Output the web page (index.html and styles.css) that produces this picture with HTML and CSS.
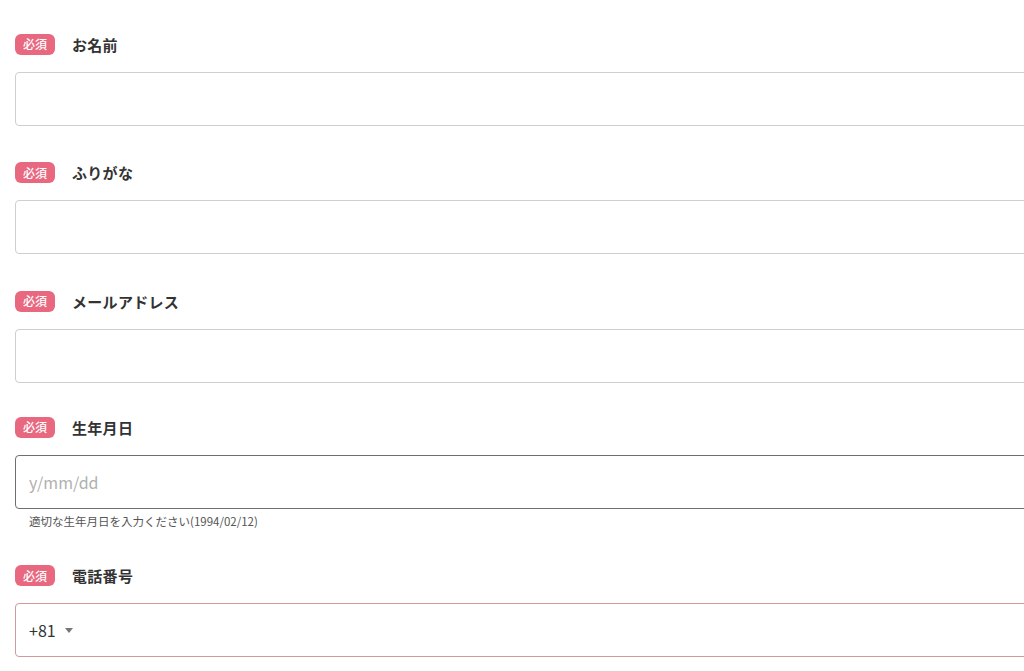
FILE: index.html
```html
<!DOCTYPE html>
<html lang="ja">
<head>
<meta charset="utf-8">
<link rel="stylesheet" href="styles.css">
</head>
<body>
<form class="form">
  <div class="field">
    <div class="field-head"><span class="badge">必須</span><span class="label">お名前</span></div>
    <div class="input"></div>
  </div>
  <div class="field">
    <div class="field-head"><span class="badge">必須</span><span class="label">ふりがな</span></div>
    <div class="input"></div>
  </div>
  <div class="field field-tight">
    <div class="field-head"><span class="badge">必須</span><span class="label">メールアドレス</span></div>
    <div class="input"></div>
  </div>
  <div class="field field-date">
    <div class="field-head"><span class="badge">必須</span><span class="label">生年月日</span></div>
    <div class="input input-dark"><span class="placeholder">y/mm/dd</span></div>
    <div class="help">適切な生年月日を入力ください(1994/02/12)</div>
  </div>
  <div class="field">
    <div class="field-head"><span class="badge">必須</span><span class="label">電話番号</span></div>
    <div class="input input-error"><span class="code">+81</span><span class="caret"></span></div>
  </div>
</form>
</body>
</html>
```
FILE: styles.css
```css
html, body {
  margin: 0;
  padding: 0;
  background: #fff;
  overflow: hidden;
}
body {
  font-family: "Noto Sans CJK JP", "Noto Sans", sans-serif;
  color: #333;
}
.form {
  display: flex;
  flex-direction: column;
  padding: 33px 0 0 15px;
  width: 1060px;
}
.field {
  display: flex;
  flex-direction: column;
  margin-bottom: 36px;
}
.field-tight {
  margin-bottom: 33.5px;
}
.field-date {
  margin-bottom: 0;
}
.field-head {
  display: flex;
  align-items: center;
  height: 22px;
  margin-bottom: 16.5px;
}
.badge {
  display: inline-flex;
  align-items: center;
  justify-content: center;
  width: 40px;
  height: 21px;
  border-radius: 6px;
  background: #e8687f;
  color: #fff;
  font-size: 12px;
  font-weight: 500;
  line-height: 1;
  margin-right: 17px;
}
.label {
  font-size: 15px;
  font-weight: 700;
  color: #333;
  letter-spacing: 0.3px;
}
.input {
  box-sizing: border-box;
  height: 54px;
  border: 1px solid #cfcfcf;
  border-radius: 4px;
  display: flex;
  align-items: center;
  padding-left: 13px;
}
.input-dark {
  border-color: #6e6e6e;
}
.input-error {
  border-color: #d29a9a;
}
.placeholder {
  font-size: 16px;
  color: #b0b0b0;
}
.help {
  font-size: 11.5px;
  color: #555;
  margin: 5px 0 36px 14px;
  line-height: 15px;
}
.code {
  font-size: 16px;
  color: #333;
}
.caret {
  width: 0;
  height: 0;
  border-left: 4.5px solid transparent;
  border-right: 4.5px solid transparent;
  border-top: 5px solid #777;
  margin-left: 9px;
  margin-top: 1px;
}
```
